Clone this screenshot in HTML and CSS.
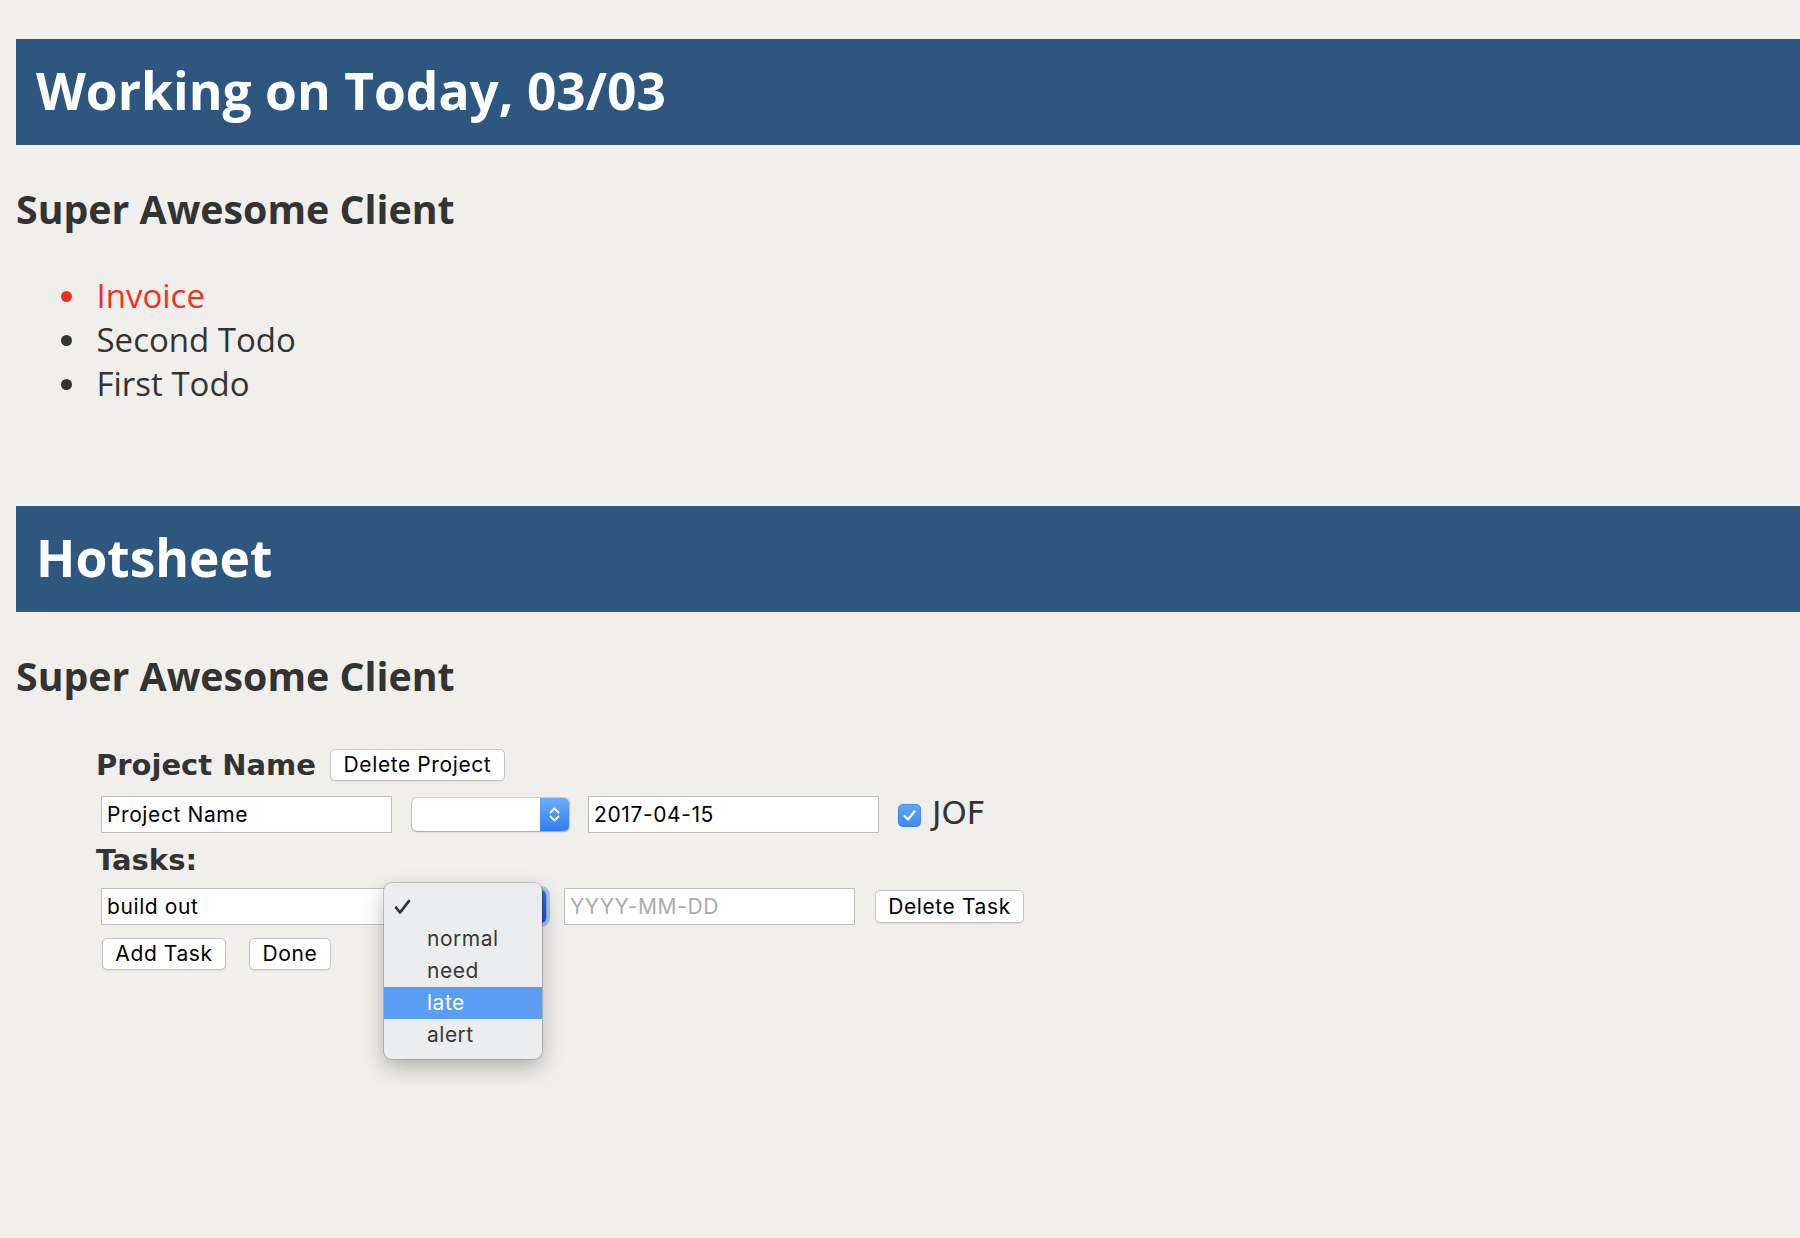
FILE: index.html
```html
<!DOCTYPE html>
<html lang="en">
<head>
<meta charset="utf-8">
<title>Working on Today</title>
<link rel="stylesheet" href="styles.css">
</head>
<body>
<div class="page">
  <section class="today">
    <h1 class="banner">Working on Today, 03/03</h1>
    <h2 class="client">Super Awesome Client</h2>
    <ul class="todos">
      <li class="todo urgent">Invoice</li>
      <li class="todo">Second Todo</li>
      <li class="todo">First Todo</li>
    </ul>
  </section>

  <section class="hotsheet">
    <h1 class="banner">Hotsheet</h1>
    <h2 class="client">Super Awesome Client</h2>
    <div class="project">
      <div class="project-head">
        <h3 class="label-title">Project Name</h3>
        <button class="btn btn-del-project">Delete Project</button>
      </div>
      <div class="row row-project">
        <input class="field" type="text" value="Project Name">
        <div class="select select-project">
          <span class="stepper">
            <svg width="29" height="33" viewBox="0 0 29 33"><path d="M10.5 14.5 L14.5 10.5 L18.5 14.5 M10.5 18.5 L14.5 22.5 L18.5 18.5" fill="none" stroke="#fff" stroke-width="1.8" stroke-linecap="round" stroke-linejoin="round"/></svg>
          </span>
        </div>
        <input class="field field-date" type="text" value="2017-04-15">
        <span class="checkbox">
          <svg width="23" height="23" viewBox="0 0 23 23"><path d="M6.5 12 L10 15.5 L16.5 7.5" fill="none" stroke="#fff" stroke-width="2.2" stroke-linecap="round" stroke-linejoin="round"/></svg>
        </span>
        <span class="owner">JOF</span>
      </div>
      <h3 class="label-title tasks-title">Tasks:</h3>
      <div class="row row-task">
        <input class="field" type="text" value="build out">
        <div class="select select-task">
          <span class="stepper stepper-pressed"></span>
          <div class="menu">
            <div class="menu-item checked">
              <svg class="tick" width="17" height="16" viewBox="0 0 17 16"><path d="M2 8.5 L6 13.5 L15 2" fill="none" stroke="#333" stroke-width="2.8" stroke-linecap="round" stroke-linejoin="round"/></svg>
            </div>
            <div class="menu-item">normal</div>
            <div class="menu-item">need</div>
            <div class="menu-item active">late</div>
            <div class="menu-item">alert</div>
          </div>
        </div>
        <input class="field field-date2" type="text" placeholder="YYYY-MM-DD">
        <button class="btn btn-del-task">Delete Task</button>
      </div>
      <div class="row row-actions">
        <button class="btn btn-add">Add Task</button>
        <button class="btn btn-done">Done</button>
      </div>
    </div>
  </section>
</div>
</body>
</html>
```
FILE: styles.css
```css
html, body {
  margin: 0;
  padding: 0;
  background: #f0efeb;
}

body {
  min-height: 1238px;
  color: #333;
  font-family: "Open Sans", "Noto Sans", sans-serif;
}

.page {
  padding: 39px 0 0 16px;
}

.banner {
  margin: 0;
  height: 106px;
  box-sizing: border-box;
  padding: 0 0 4px 20px;
  line-height: 102px;
  background: #2d577e;
  color: #fff;
  font-family: "Open Sans", "Noto Sans", sans-serif;
  font-weight: 700;
  font-size: 51.5px;
  white-space: nowrap;
}

.client {
  margin: 37px 0 0;
  font-family: "Open Sans", "Noto Sans", sans-serif;
  font-weight: 700;
  font-size: 39.3px;
  line-height: 54px;
  color: #333;
}

.todos {
  margin: 38px 0 0;
  padding: 0 0 0 80.5px;
  list-style: none;
}

.todo {
  font-family: "Open Sans", "Noto Sans", sans-serif;
  font-size: 33px;
  line-height: 44px;
  color: #333;
}

.todo::before {
  content: "";
  display: inline-block;
  width: 11px;
  height: 11px;
  margin: 0 24.5px 0 -35.5px;
  border-radius: 50%;
  background: currentColor;
  vertical-align: 6px;
}

.todo.urgent {
  color: #ee3124;
}

.hotsheet {
  margin-top: 100px;
}

.project {
  margin: 46px 0 0 80px;
}

.project-head {
  display: flex;
  align-items: center;
  height: 32px;
}

.label-title {
  margin: 0;
  font-family: "DejaVu Sans", sans-serif;
  font-weight: 700;
  font-size: 29px;
  line-height: 32px;
  color: #333;
}

.tasks-title {
  margin-top: 11px;
}

.row {
  display: flex;
  align-items: center;
  padding-left: 5px;
}

.row-project {
  margin-top: 15px;
  height: 37px;
}

.row-task {
  margin-top: 12px;
  height: 37px;
}

.row-actions {
  margin-top: 13px;
  padding-left: 6px;
}

.field {
  box-sizing: border-box;
  width: 291px;
  height: 37px;
  margin: 0;
  padding: 0 5px;
  border: 1px solid #bebebe;
  border-radius: 0;
  background: #fff;
  font-family: Inter, "Liberation Sans", sans-serif;
  font-size: 21px;
  letter-spacing: 0.6px;
  color: #000;
  outline: none;
}

.field::placeholder {
  color: #ababab;
}

.select {
  position: relative;
  box-sizing: border-box;
  height: 33px;
  margin-left: 20px;
  border-radius: 5px;
  background: #fff;
  box-shadow: 0 0 0 1px rgba(0, 0, 0, 0.13), 0 1px 2px rgba(0, 0, 0, 0.22);
  display: flex;
  justify-content: flex-end;
}

.select-project {
  width: 157px;
}

.select-task {
  width: 134px;
  box-shadow: 0 0 0 1px rgba(0, 0, 0, 0.13), 0 0 0 4px rgba(80, 150, 240, 0.45);
}

.stepper {
  display: block;
  width: 29px;
  height: 33px;
  border-radius: 0 5px 5px 0;
  background: linear-gradient(#6eaefa, #2e7df4);
}

.stepper svg {
  display: block;
}

.stepper-pressed {
  background: linear-gradient(#2f6fe0, #1a52cf);
}

.field-date {
  margin-left: 19px;
}

.field-date2 {
  margin-left: 18px;
}

.checkbox {
  display: block;
  width: 23px;
  height: 23px;
  margin-left: 19px;
  margin-top: 2px;
  border-radius: 5px;
  background: linear-gradient(#62a6f8, #3e8af1);
  box-shadow: inset 0 0 0 1px rgba(30, 100, 210, 0.35);
}

.checkbox svg {
  display: block;
}

.owner {
  margin-left: 11px;
  margin-bottom: 4px;
  font-family: "DejaVu Sans", sans-serif;
  font-size: 32px;
  color: #333;
}

.btn {
  box-sizing: border-box;
  height: 32px;
  margin: 0;
  padding: 0;
  border: 1px solid #c4c4c4;
  border-radius: 5px;
  background: #fff;
  box-shadow: 0 1px 1px rgba(0, 0, 0, 0.08);
  font-family: Inter, "Liberation Sans", sans-serif;
  font-size: 21px;
  letter-spacing: 0.6px;
  line-height: 30px;
  color: #000;
  text-align: center;
}

.btn-del-project {
  width: 175px;
  margin-left: 14px;
}

.btn-del-task {
  width: 149px;
  height: 33px;
  margin-left: 20px;
}

.btn-add {
  width: 124px;
}

.btn-done {
  width: 82px;
  margin-left: 23px;
}

.menu {
  position: absolute;
  left: -28px;
  top: -7px;
  z-index: 10;
  box-sizing: border-box;
  width: 158px;
  padding: 8px 0;
  border-radius: 8px;
  background: #ecedee;
  box-shadow: 0 0 0 1px rgba(0, 0, 0, 0.16), 0 8px 22px rgba(0, 0, 0, 0.28);
}

.menu-item {
  position: relative;
  height: 32px;
  padding-left: 43px;
  font-family: Inter, "Liberation Sans", sans-serif;
  font-size: 21px;
  letter-spacing: 0.5px;
  line-height: 32px;
  color: #383838;
}

.menu-item.active {
  background: #5a9cf6;
  color: #fff;
}

.tick {
  position: absolute;
  left: 10px;
  top: 8px;
}
```
